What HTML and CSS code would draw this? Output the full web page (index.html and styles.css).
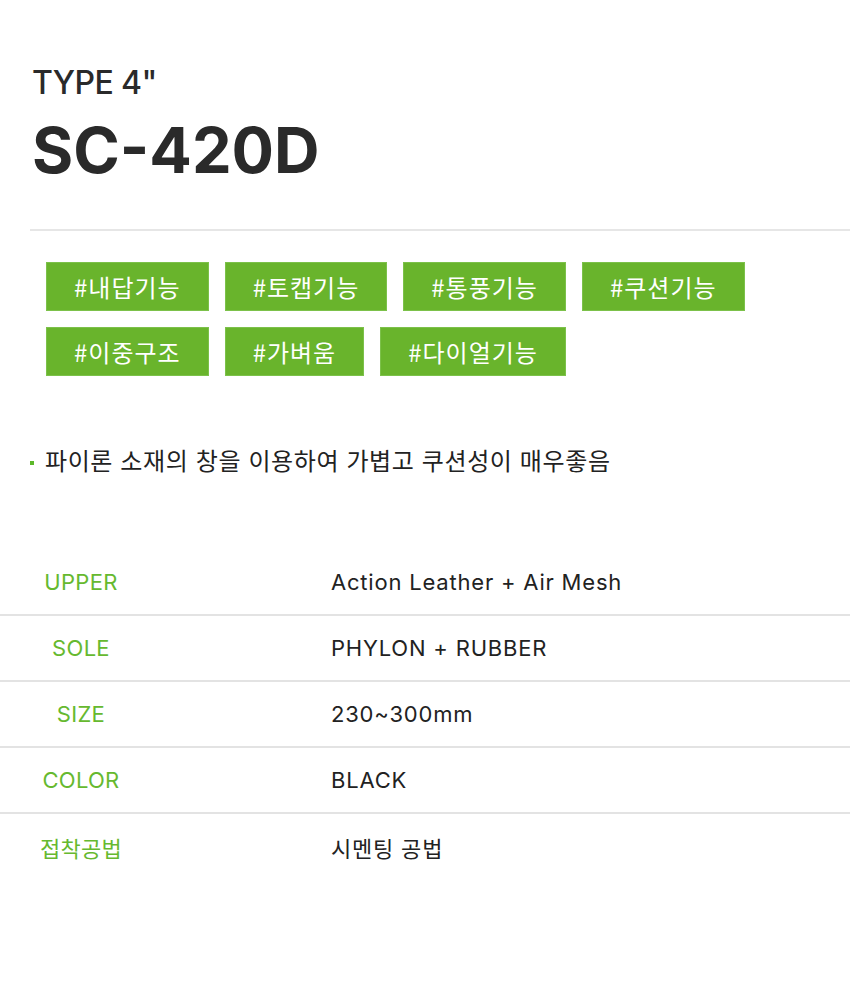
FILE: index.html
```html
<!DOCTYPE html>
<html lang="ko">
<head>
<meta charset="utf-8">
<title>SC-420D</title>
<link rel="stylesheet" href="styles.css">
</head>
<body>
<div class="page">
  <header class="head">
    <div class="type">TYPE 4"</div>
    <h1 class="model">SC-420D</h1>
  </header>
  <hr class="divider">
  <ul class="tags">
    <li class="tag">#내답기능</li>
    <li class="tag">#토캡기능</li>
    <li class="tag">#통풍기능</li>
    <li class="tag">#쿠션기능</li>
    <li class="tag">#이중구조</li>
    <li class="tag">#가벼움</li>
    <li class="tag">#다이얼기능</li>
  </ul>
  <ul class="notes">
    <li class="note">파이론 소재의 창을 이용하여 가볍고 쿠션성이 매우좋음</li>
  </ul>
</div>
<div class="specs">
  <div class="row"><div class="label">UPPER</div><div class="value">Action Leather + Air Mesh</div></div>
  <div class="row"><div class="label">SOLE</div><div class="value">PHYLON + RUBBER</div></div>
  <div class="row"><div class="label">SIZE</div><div class="value">230~300mm</div></div>
  <div class="row"><div class="label">COLOR</div><div class="value">BLACK</div></div>
  <div class="row last"><div class="label">접착공법</div><div class="value">시멘팅 공법</div></div>
</div>
</body>
</html>
```
FILE: styles.css
```css
* { box-sizing: border-box; }
html, body { margin: 0; padding: 0; background: #fff; }
body {
  font-family: "Inter", "Noto Sans CJK KR", sans-serif;
  color: #222;
  width: 850px;
}
.page { padding: 63px 0 0 30px; }
.head { padding-left: 2px; }
.type {
  font-size: 32px;
  line-height: 40px;
  font-weight: 500;
  color: #2a2a2a;
  letter-spacing: -0.6px;
}
.model {
  margin: 8px 0 0;
  font-size: 63px;
  line-height: 78px;
  font-weight: 700;
  color: #2a2a2a;
  letter-spacing: 0;
}
.divider {
  border: 0;
  height: 2px;
  background: #e6e6e6;
  margin: 40px 0 0;
}
.tags {
  list-style: none;
  margin: 31px 0 0;
  padding: 0 0 0 16px;
  display: flex;
  flex-wrap: wrap;
  gap: 16px;
  width: 740px;
}
.tag {
  background: #69b42c;
  border: 1px solid #7cc14a;
  color: #fff;
  height: 49px;
  line-height: 47px;
  padding: 0 27px;
  font-family: "Noto Sans CJK KR", sans-serif;
  font-size: 24px;
  font-weight: 400;
  letter-spacing: 1px;
}
.notes {
  list-style: none;
  margin: 68px 0 0;
  padding: 0;
}
.note {
  position: relative;
  padding-left: 15px;
  font-family: "Noto Sans CJK KR", sans-serif;
  font-size: 24px;
  line-height: 32px;
  color: #222;
  letter-spacing: 0.6px;
}
.note::before {
  content: "";
  position: absolute;
  left: 0;
  top: 17px;
  width: 4px;
  height: 4px;
  background: #5cb82a;
}
.specs { margin-top: 74px; }
.row {
  display: grid;
  grid-template-columns: 162px 1fr;
  align-items: center;
  height: 66px;
  border-bottom: 2px solid #e3e3e3;
}
.row.last { border-bottom: 0; }
.label {
  text-align: center;
  color: #66b92f;
  font-size: 22px;
  font-weight: 400;
  letter-spacing: 0.3px;
}
.value {
  padding-left: 169px;
  font-size: 22px;
  color: #222;
  letter-spacing: 0.8px;
}
```
